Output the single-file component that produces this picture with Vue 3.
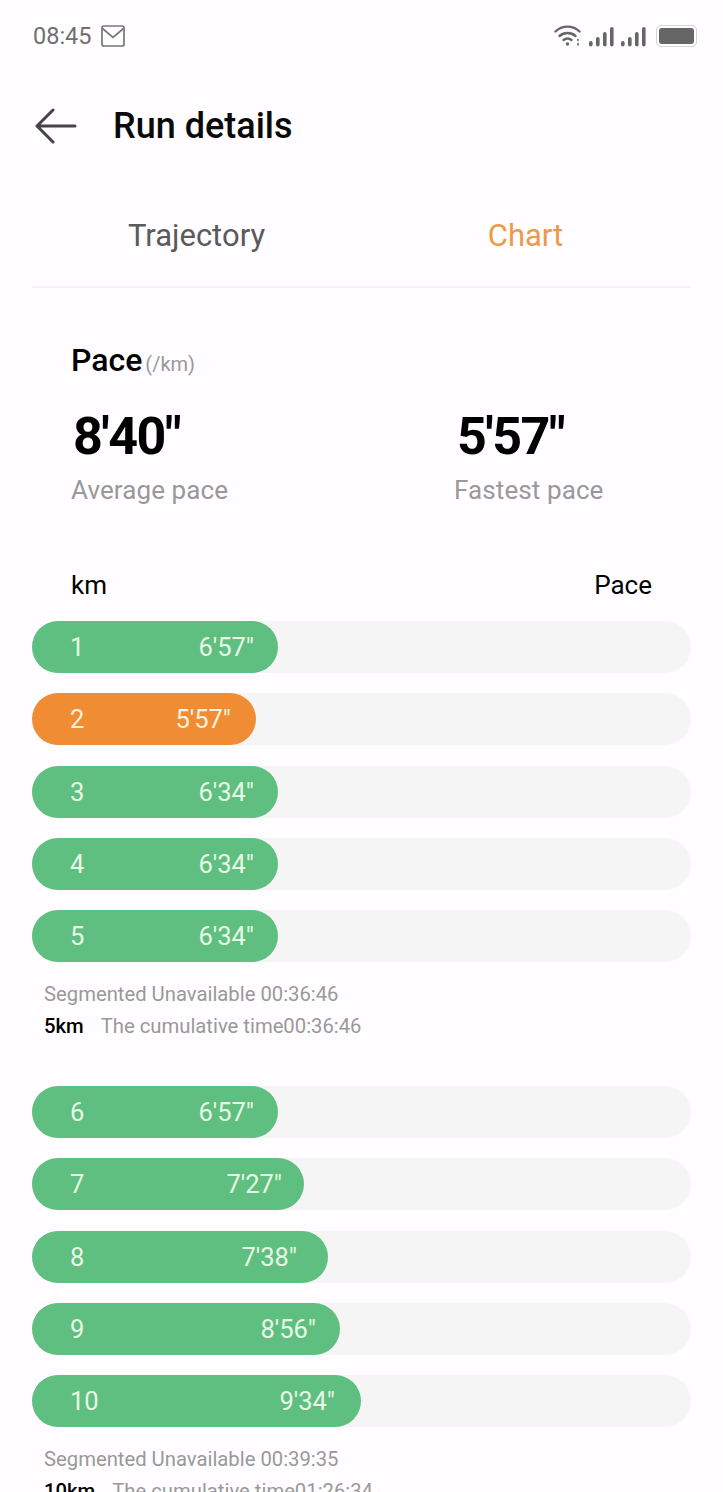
<script setup>
const groups = [
  {
    rows: [
      { km: 1, pace: `6'57"`, width: 246, pad: 24 },
      { km: 2, pace: `5'57"`, width: 224, pad: 25, best: true },
      { km: 3, pace: `6'34"`, width: 246, pad: 24 },
      { km: 4, pace: `6'34"`, width: 246, pad: 24 },
      { km: 5, pace: `6'34"`, width: 246, pad: 24 },
    ],
    segment: 'Segmented Unavailable 00:36:46',
    total: '5km',
    cumulative: 'The cumulative time00:36:46',
  },
  {
    rows: [
      { km: 6, pace: `6'57"`, width: 246, pad: 24 },
      { km: 7, pace: `7'27"`, width: 272, pad: 22 },
      { km: 8, pace: `7'38"`, width: 296, pad: 31 },
      { km: 9, pace: `8'56"`, width: 308, pad: 24 },
      { km: 10, pace: `9'34"`, width: 329, pad: 26 },
    ],
    segment: 'Segmented Unavailable 00:39:35',
    total: '10km',
    cumulative: 'The cumulative time01:26:34',
  },
]
</script>

<template>
  <div class="page">
    <div class="status">
      <div class="status-left">
        <span class="clock">08:45</span>
        <svg class="mail" width="24" height="22" viewBox="0 0 24 22" fill="none" stroke="#777" stroke-width="1.7">
          <rect x="1" y="1" width="22" height="20" rx="2" />
          <path d="M1.5 3.5 L12 12.5 L22.5 3.5" />
        </svg>
      </div>
      <div class="status-right">
        <svg class="wifi" width="28" height="22" viewBox="0 0 28 22" fill="none" stroke="#666" stroke-width="2.4" stroke-linecap="round">
          <path d="M1.5 7.5 C8 1 19 1 25.5 7.5" />
          <path d="M5.5 12 C10 8 17 8 21.5 12" />
          <path d="M9.5 16 C12 14 15 14 17.5 16" />
          <circle cx="13.5" cy="20" r="1.7" fill="#666" stroke="none" />
          <path d="M24 15.5 V16.5 M24 19.5 V21" stroke-width="1.6" />
        </svg>
        <svg class="signal" width="25" height="20" viewBox="0 0 25 20" fill="#666">
          <rect x="0" y="14" width="3.6" height="5.5" rx="1.8" />
          <rect x="7" y="10" width="3.6" height="9.5" rx="1.8" />
          <rect x="14" y="5" width="3.6" height="14.5" rx="1.8" />
          <rect x="21" y="0" width="3.6" height="19.5" rx="1.8" />
        </svg>
        <svg class="signal" width="25" height="20" viewBox="0 0 25 20" fill="#666">
          <rect x="0" y="14" width="3.6" height="5.5" rx="1.8" />
          <rect x="7" y="10" width="3.6" height="9.5" rx="1.8" />
          <rect x="14" y="5" width="3.6" height="14.5" rx="1.8" />
          <rect x="21" y="0" width="3.6" height="19.5" rx="1.8" />
        </svg>
        <div class="battery"><div class="battery-fill"></div></div>
      </div>
    </div>

    <div class="header">
      <svg width="42" height="36" viewBox="0 0 42 36" fill="none" stroke="#444" stroke-width="3" stroke-linecap="round" stroke-linejoin="round">
        <path d="M40 18 H2 M18 2 L2 18 L18 34" />
      </svg>
      <h1>Run details</h1>
    </div>

    <div class="tabs">
      <span class="tab">Trajectory</span>
      <span class="tab active">Chart</span>
    </div>

    <section class="summary">
      <div class="summary-title"><strong>Pace</strong><span>(/km)</span></div>
      <div class="stats">
        <div class="stat">
          <div class="stat-value">8'40"</div>
          <div class="stat-label">Average pace</div>
        </div>
        <div class="stat second">
          <div class="stat-value">5'57"</div>
          <div class="stat-label">Fastest pace</div>
        </div>
      </div>
    </section>

    <div class="columns"><span>km</span><span>Pace</span></div>

    <div v-for="group in groups" :key="group.total" class="group">
      <div class="rows">
        <div v-for="row in group.rows" :key="row.km" class="track">
          <div
            class="bar"
            :class="{ best: row.best }"
            :style="{ width: row.width + 'px', paddingRight: row.pad + 'px' }"
          >
            <span>{{ row.km }}</span>
            <span>{{ row.pace }}</span>
          </div>
        </div>
      </div>
      <div class="note">{{ group.segment }}</div>
      <div class="note second-note"><b>{{ group.total }}</b>{{ group.cumulative }}</div>
    </div>
  </div>
</template>

<style scoped>
.page {
  width: 723px;
  height: 1492px;
  overflow: hidden;
  background: #fffdff;
  font-family: Roboto, "Noto Sans", sans-serif;
  color: #000;
}
.status {
  height: 72px;
  padding: 0 26px 0 33px;
  display: flex;
  justify-content: space-between;
  align-items: center;
  box-sizing: border-box;
}
.status-left { display: flex; align-items: center; gap: 9px; }
.clock { font-size: 23.5px; color: #707070; }
.status-right { display: flex; align-items: center; gap: 7px; }
.wifi { margin-top: -2px; }
.signal { margin-top: 2px; }
.battery {
  width: 41px;
  height: 22px;
  margin-left: 3px;
  padding: 2px;
  box-sizing: border-box;
  border: 1px solid #d4d4d4;
  border-radius: 5px;
}
.battery-fill { width: 100%; height: 100%; background: #666; border-radius: 3px; }
.header {
  height: 108px;
  padding-left: 35px;
  display: flex;
  align-items: center;
  gap: 36px;
}
.header h1 { margin: 0; font-size: 36px; font-weight: 500; color: #0a0a0a; }
.tabs {
  margin: 0 32px;
  height: 108px;
  padding-top: 4px;
  display: grid;
  grid-template-columns: 329px 329px;
  align-items: center;
  border-bottom: 2px solid #f3f2f3;
  box-sizing: border-box;
}
.tab { font-size: 31px; color: #5a5a5a; text-align: center; }
.tab.active { color: #ec9a4a; }
.summary { padding: 53px 0 0 71px; }
.summary-title { display: flex; align-items: baseline; gap: 3px; height: 40px; }
.summary-title strong { font-size: 32px; font-weight: 500; }
.summary-title span { font-size: 20px; color: #999; }
.stats { display: flex; margin-top: 24px; }
.stat { width: 383px; flex: none; }
.stat-value { font-size: 52px; font-weight: 700; line-height: 64px; padding-left: 2px; letter-spacing: -1.5px; }
.second .stat-value { padding-left: 3px; }
.stat-label { font-size: 26px; color: #999; line-height: 42px; letter-spacing: 0.1px; }
.columns {
  margin-top: 56px;
  padding: 0 71px;
  display: flex;
  justify-content: space-between;
  font-size: 26px;
  line-height: 36px;
}
.group { margin: 0 32px; }
.rows { display: flex; flex-direction: column; gap: 20.25px; padding-top: 18px; }
.track { height: 52px; border-radius: 26px; background: #f6f5f6; }
.bar {
  height: 100%;
  box-sizing: border-box;
  padding-left: 38px;
  border-radius: 26px;
  background: #5fbf80;
  color: #e9f8e6;
  font-size: 25.5px;
  display: flex;
  justify-content: space-between;
  align-items: center;
}
.bar.best { background: #f08c34; color: #fdf1dc; }
.note { margin-left: 12px; font-size: 20.25px; line-height: 32px; color: #999; margin-top: 16px; }
.second-note { margin-top: 0; }
.note b { font-weight: 500; color: #000; margin-right: 17px; }
.group + .group { margin-top: 26px; }
</style>

<style>
html, body { background: #fffdff; }
</style>
